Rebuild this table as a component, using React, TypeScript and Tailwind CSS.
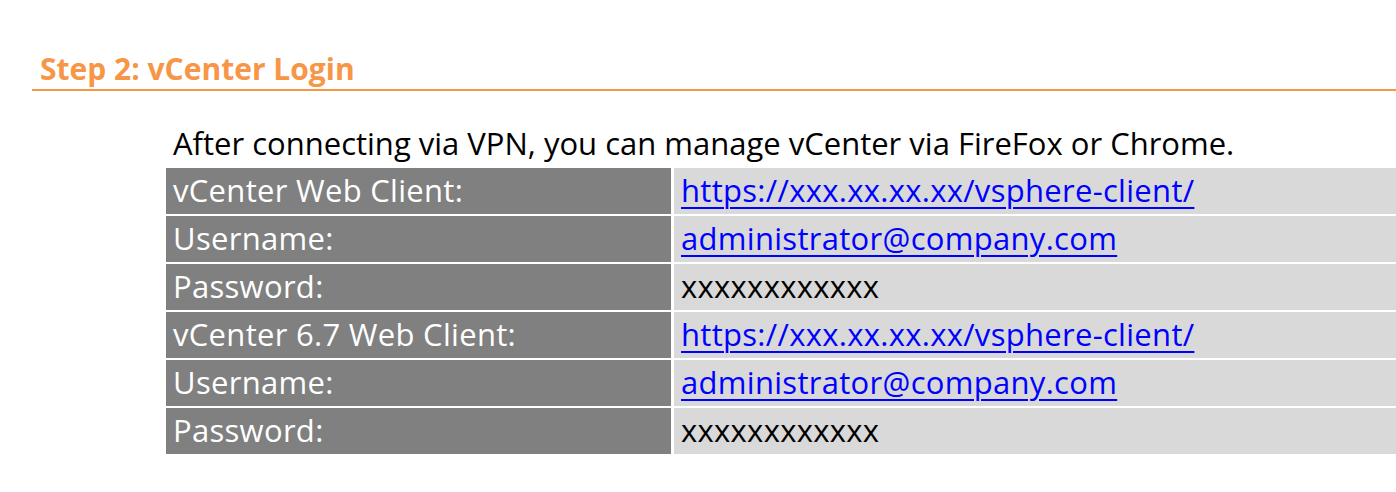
import React from "react";

const rows: { label: string; value: string; link: boolean }[] = [
  { label: "vCenter Web Client:", value: "https://xxx.xx.xx.xx/vsphere-client/", link: true },
  { label: "Username:", value: "administrator@company.com", link: true },
  { label: "Password:", value: "xxxxxxxxxxxx", link: false },
  { label: "vCenter 6.7 Web Client:", value: "https://xxx.xx.xx.xx/vsphere-client/", link: true },
  { label: "Username:", value: "administrator@company.com", link: true },
  { label: "Password:", value: "xxxxxxxxxxxx", link: false },
];

export default function App() {
  return (
    <div className="w-[1396px] h-[492px] bg-white overflow-hidden" style={{ fontFamily: "'Open Sans', 'Noto Sans', sans-serif" }}>
      <div className="pt-[49px] ml-[32px]">
        <div className="pl-[8px] border-b-2 border-[#f79646] text-[30px] leading-[40px] font-bold text-[#f79646]">
          Step 2: vCenter Login
        </div>
      </div>
      <div className="ml-[166px] mt-[32px]">
        <p className="pl-[7px] text-[31px] leading-[40px] text-black">
          After connecting via VPN, you can manage vCenter via FireFox or Chrome.
        </p>
        <div className="mt-[5px] flex flex-col gap-[2px]">
          {rows.map((r, i) => (
            <div key={i} className="flex gap-[3px] h-[46px]">
              <div className="w-[505px] bg-[#808080] text-white pl-[7px] text-[31px] leading-[44px] tracking-[0.3px]">{r.label}</div>
              <div className="flex-1 bg-[#d9d9d9] pl-[7px] text-[31px] leading-[44px] tracking-[0.3px]">
                {r.link ? (
                  <span className="text-[#0000ff] underline decoration-[2px] underline-offset-[5px]">{r.value}</span>
                ) : (
                  <span className="text-black">{r.value}</span>
                )}
              </div>
            </div>
          ))}
        </div>
      </div>
    </div>
  );
}
